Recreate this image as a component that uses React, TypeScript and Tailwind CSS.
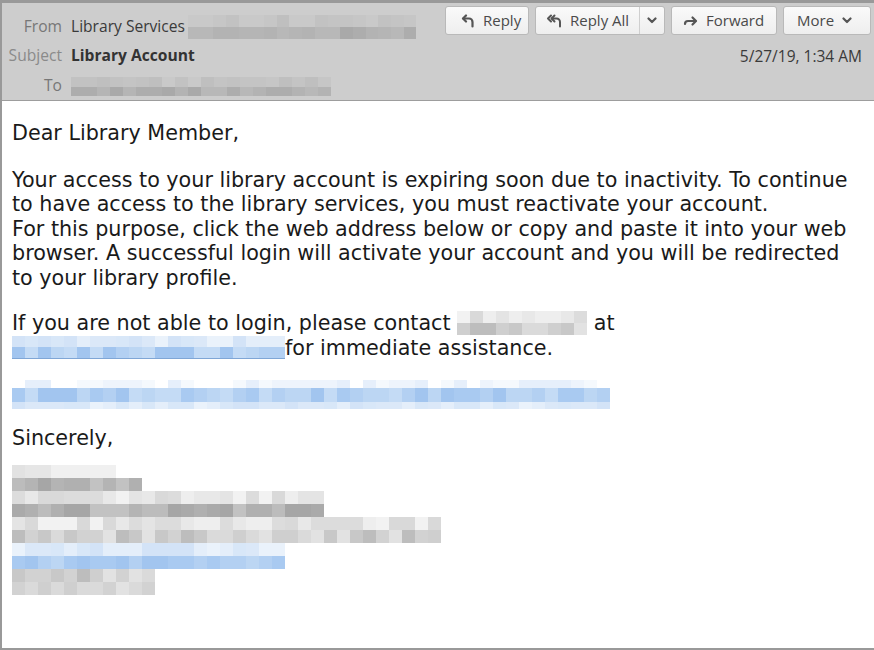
import React from "react";

type Row = { n: number; h: number; palette: string[] };

// deterministic pseudo-random so the mosaic doesn't change between renders
const rand = (seed: number) => {
  let s = seed;
  return () => {
    s = (s * 9301 + 49297) % 233280;
    return s / 233280;
  };
};

const Mosaic = ({
  rows,
  cell = 13,
  seed = 1,
  className = "",
}: {
  rows: Row[];
  cell?: number;
  seed?: number;
  className?: string;
}) => {
  const r = rand(seed);
  return (
    <div className={"flex flex-col " + className}>
      {rows.map((row, i) => (
        <div key={i} className="flex">
          {Array.from({ length: row.n }).map((_, j) => (
            <div
              key={j}
              style={{
                width: cell,
                height: row.h,
                background: row.palette[Math.floor(r() * row.palette.length)],
              }}
            />
          ))}
        </div>
      ))}
    </div>
  );
};

const HEAD_LIGHT = ["#c6c6c6", "#c2c2c2", "#c9c9c9", "#c4c4c4", "#bfbfbf"];
const HEAD_DARK = ["#b3b3b3", "#adadad", "#b8b8b8", "#a9a9a9", "#b5b5b5"];
const GRAY_LIGHT = ["#e4e4e4", "#eeeeee", "#dcdcdc", "#f2f2f2", "#e8e8e8", "#d9d9d9"];
const GRAY_MID = ["#d2d2d2", "#c8c8c8", "#dadada", "#cfcfcf", "#e2e2e2", "#bdbdbd"];
const GRAY_DARK = ["#b4b4b4", "#aaaaaa", "#bcbcbc", "#a6a6a6", "#c2c2c2", "#b0b0b0"];
const BLUE_LIGHT = ["#dbe8f8", "#e4eefa", "#d3e3f7", "#eaf2fb", "#d8e7f8"];
const BLUE = ["#b3d0f2", "#a9caf1", "#bcd6f3", "#a2c5ef", "#c4dbf5"];
const BLUE_PALE = ["#eef4fc", "#f5f9fd", "#e6effb", "#ffffff"];

const ReplyIcon = () => (
  <svg width="14" height="14" viewBox="0 0 14 14" fill="none" stroke="#555" strokeWidth="2.2" strokeLinecap="round" strokeLinejoin="round">
    <path d="M5 1.5 2 4.5l3 3" />
    <path d="M2.5 4.5h5.5a3.5 3.5 0 0 1 3.5 3.5v4.5" />
  </svg>
);

const ReplyAllIcon = () => (
  <svg width="17" height="14" viewBox="0 0 17 14" fill="none" stroke="#555" strokeWidth="2" strokeLinecap="round" strokeLinejoin="round">
    <path d="M5 1.5 2 4.5l3 3" />
    <path d="M8.5 1.5 5.5 4.5l3 3" />
    <path d="M6 4.5h4.5a3.5 3.5 0 0 1 3.5 3.5v4.5" />
  </svg>
);

const ForwardIcon = () => (
  <svg width="15" height="12" viewBox="0 0 15 12" fill="none" stroke="#555" strokeWidth="2.2" strokeLinecap="round" strokeLinejoin="round">
    <path d="M9.5 2.5 13 6l-3.5 3.5" />
    <path d="M12.5 6H5a3 3 0 0 0-3 3" />
  </svg>
);

const Chevron = () => (
  <svg width="10" height="7" viewBox="0 0 10 7" fill="none" stroke="#555" strokeWidth="2.2" strokeLinecap="round" strokeLinejoin="round">
    <path d="M1.5 1.5 5 5l3.5-3.5" />
  </svg>
);

const btn =
  "h-[29px] flex items-center gap-[8px] border border-[#b9b9b9] rounded-[3px] bg-gradient-to-b from-[#fafafa] to-[#eeeeee] text-[15px] text-[#4a4a4a]";

export default function App() {
  return (
    <div
      className="w-[874px] h-[650px] flex flex-col border-t-[3px] border-l-2 border-b-2 border-[#999999] bg-white overflow-hidden"
      style={{ fontFamily: "'DejaVu Sans', sans-serif" }}
    >
      <header
        className="h-[98px] shrink-0 flex justify-between bg-[#cdcdcd] border-b border-[#9d9d9d]"
        style={{ fontFamily: "'Open Sans', sans-serif" }}
      >
        <div className="pt-[9px] grid grid-cols-[60px_auto] gap-x-[9px] text-[15.6px] auto-rows-[29px] items-center">
          <span className="text-right text-[#777777]">From</span>
          <div className="flex items-center gap-[3px]">
            <span className="text-[#3a3a3a]">Library Services</span>
            <Mosaic
              seed={7}
              cell={12.7}
              rows={[
                { n: 18, h: 12, palette: HEAD_LIGHT },
                { n: 18, h: 12, palette: HEAD_DARK },
              ]}
            />
          </div>
          <span className="text-right text-[#8a8a8a]">Subject</span>
          <span className="font-bold text-[#333333]">Library Account</span>
          <span className="text-right text-[#777777] pt-[3px]">To</span>
          <div className="pt-[3px]">
            <Mosaic
              seed={3}
              cell={13}
              rows={[
                { n: 20, h: 10, palette: HEAD_LIGHT },
                { n: 20, h: 9, palette: HEAD_DARK },
              ]}
            />
          </div>
        </div>
        <div className="flex flex-col items-end pt-[3px] pr-[3px]">
          <div className="flex gap-[6px]">
            <button className={btn + " w-[84px] pl-[15px]"}>
              <ReplyIcon />
              <span>Reply</span>
            </button>
            <div className="flex h-[29px] border border-[#b9b9b9] rounded-[3px] bg-gradient-to-b from-[#fafafa] to-[#eeeeee] text-[15px] text-[#4a4a4a]">
              <button className="w-[104px] flex items-center gap-[7px] pl-[10px] border-r border-[#cfcfcf]">
                <ReplyAllIcon />
                <span>Reply All</span>
              </button>
              <button className="w-[24px] flex items-center justify-center">
                <Chevron />
              </button>
            </div>
            <button className={btn + " w-[106px] pl-[11px]"}>
              <ForwardIcon />
              <span>Forward</span>
            </button>
            <button className={btn + " w-[88px] pl-[13px]"}>
              <span>More</span>
              <Chevron />
            </button>
          </div>
          <div className="mt-[10px] pr-[9px] text-[15.5px] text-[#3a3a3a]">5/27/19, 1:34 AM</div>
        </div>
      </header>

      <main className="flex-1 pl-[10px] pt-[20px] text-[20.7px] leading-[24.5px] text-[#1a1a1a] whitespace-nowrap">
        <p>Dear Library Member,</p>
        <p className="mt-[22px]">
          Your access to your library account is expiring soon due to inactivity. To continue
          <br />
          to have access to the library services, you must reactivate your account.
          <br />
          For this purpose, click the web address below or copy and paste it into your web
          <br />
          browser. A successful login will activate your account and you will be redirected
          <br />
          to your library profile.
        </p>
        <div className="mt-[21px]">
          <div className="flex items-center h-[24.5px]">
            <span>If you are not able to login, please contact&nbsp;</span>
            <Mosaic
              seed={11}
              rows={[
                { n: 10, h: 12, palette: GRAY_LIGHT },
                { n: 10, h: 12, palette: GRAY_MID },
              ]}
            />
            <span>&nbsp;at</span>
          </div>
          <div className="flex items-center h-[24.5px]">
            <div className="border-b border-[#7fa6d6]">
              <Mosaic
                seed={5}
                rows={[
                  { n: 21, h: 11, palette: BLUE_LIGHT },
                  { n: 21, h: 11, palette: BLUE },
                ]}
              />
            </div>
            <span>for immediate assistance.</span>
          </div>
        </div>
        <Mosaic
          seed={19}
          className="mt-[20px]"
          rows={[
            { n: 46, h: 8, palette: BLUE_PALE },
            { n: 46, h: 14, palette: BLUE },
            { n: 46, h: 7, palette: BLUE_LIGHT },
          ]}
        />
        <p className="mt-[17px]">Sincerely,</p>
        <Mosaic
          seed={23}
          className="mt-[14px]"
          rows={[
            { n: 8, h: 13, palette: ["#e2e2e2", "#ffffff", "#f0f0f0", "#e6e6e6"] },
            { n: 10, h: 13, palette: GRAY_DARK },
            { n: 24, h: 13, palette: GRAY_LIGHT },
            { n: 24, h: 13, palette: GRAY_DARK },
            { n: 33, h: 13, palette: GRAY_LIGHT },
            { n: 33, h: 13, palette: GRAY_MID },
            { n: 21, h: 13, palette: BLUE_LIGHT },
            { n: 21, h: 13, palette: BLUE },
            { n: 11, h: 13, palette: GRAY_MID },
            { n: 11, h: 13, palette: GRAY_MID },
          ]}
        />
      </main>
    </div>
  );
}
